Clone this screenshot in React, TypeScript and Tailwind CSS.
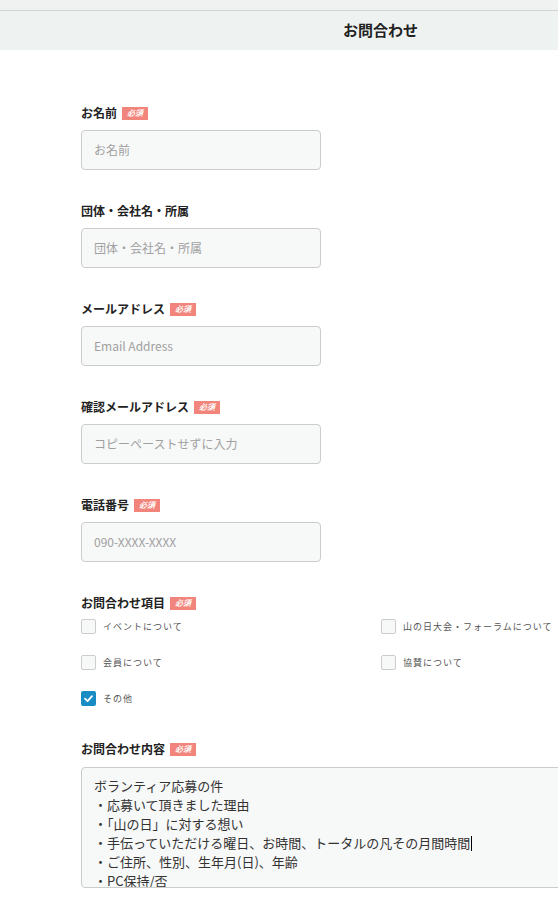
const font = { fontFamily: '"Noto Sans CJK JP", "Noto Sans", sans-serif' };

function Required() {
  return (
    <span className="inline-flex h-[13px] w-[26px] items-center justify-center bg-[#f2857b] text-[8px] font-bold italic leading-none text-white">
      必須
    </span>
  );
}

function Label({ text, required }: { text: string; required?: boolean }) {
  return (
    <div className="flex h-[18px] items-center gap-[5px] text-[12px] font-bold text-[#222]">
      <span>{text}</span>
      {required && <Required />}
    </div>
  );
}

function Field({ label, placeholder, required }: { label: string; placeholder: string; required?: boolean }) {
  return (
    <div className="flex flex-col gap-[8px]">
      <Label text={label} required={required} />
      <div className="flex h-[40px] w-[240px] items-center rounded-[4px] border border-[#cccccc] bg-[#f7f8f8] px-[12px] text-[12px] text-[#a0a0a0]">
        {placeholder}
      </div>
    </div>
  );
}

function Check({ text, checked }: { text: string; checked?: boolean }) {
  return (
    <div className="flex h-[15px] items-center gap-[7px]">
      {checked ? (
        <span className="flex h-[15px] w-[15px] shrink-0 items-center justify-center rounded-[2px] bg-[#1a8cc4]">
          <svg width="11" height="11" viewBox="0 0 12 12" fill="none">
            <path d="M2.2 6.2 L5 8.8 L9.8 3.4" stroke="white" strokeWidth="2" strokeLinecap="round" strokeLinejoin="round" />
          </svg>
        </span>
      ) : (
        <span className="h-[15px] w-[15px] shrink-0 rounded-[2px] border border-[#cccccc] bg-[#f7f8f8]" />
      )}
      <span className="whitespace-nowrap text-[9px] tracking-[1px] text-[#555]">{text}</span>
    </div>
  );
}

export default function App() {
  const lines = [
    'ボランティア応募の件',
    '・応募いて頂きました理由',
    '・「山の日」に対する想い',
    '・手伝っていただける曜日、お時間、トータルの凡その月間時間',
    '・ご住所、性別、生年月(日)、年齢',
    '・PC保持/否',
  ];

  return (
    <div className="h-[903px] w-[558px] overflow-hidden bg-white" style={font}>
      <div className="h-[10px] bg-[#eff2f1]" />
      <div className="flex h-[40px] items-center border-t border-[#d2d4d3] bg-[#eef2f0] pl-[343px] text-[15px] font-bold text-[#222]">
        お問合わせ
      </div>

      <div className="flex flex-col gap-[32px] pl-[81px] pt-[54px]">
        <Field label="お名前" placeholder="お名前" required />
        <Field label="団体・会社名・所属" placeholder="団体・会社名・所属" />
        <Field label="メールアドレス" placeholder="Email Address" required />
        <Field label="確認メールアドレス" placeholder="コピーペーストせずに入力" required />
        <Field label="電話番号" placeholder="090-XXXX-XXXX" required />

        <div className="flex flex-col">
          <Label text="お問合わせ項目" required />
          <div className="mt-[7px] grid w-[470px] grid-cols-[300px_170px] gap-y-[21px]">
            <Check text="イベントについて" />
            <Check text="山の日大会・フォーラムについて" />
            <Check text="会員について" />
            <Check text="協賛について" />
            <Check text="その他" checked />
          </div>
        </div>

        <div className="mt-[2px] flex flex-col gap-[9px]">
          <Label text="お問合わせ内容" required />
          <div className="h-[121px] w-[620px] overflow-hidden rounded-[4px] border border-[#cccccc] bg-[#f7f8f8] px-[12px] pt-[8px] text-[13px] leading-[19px] text-[#333]">
            {lines.map((l, i) => (
              <div key={i} className="whitespace-nowrap">
                {l}
                {i === 3 && <span className="ml-[1px] inline-block h-[15px] w-[1px] translate-y-[3px] bg-black" />}
              </div>
            ))}
          </div>
        </div>
      </div>
    </div>
  );
}
